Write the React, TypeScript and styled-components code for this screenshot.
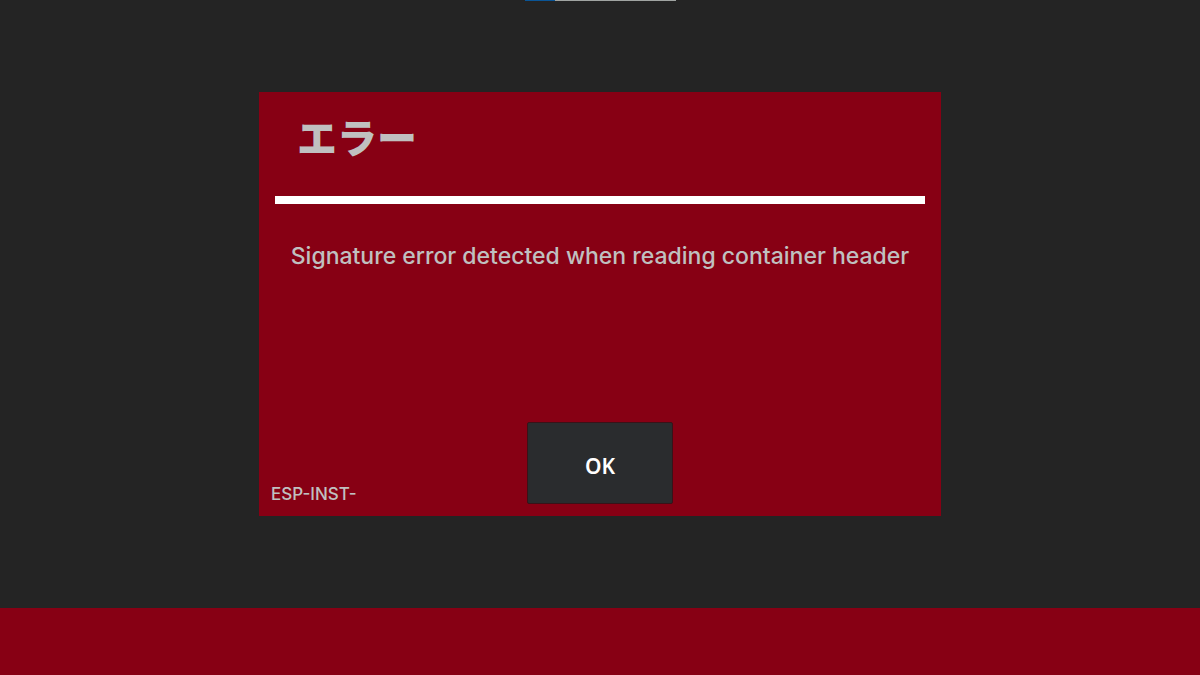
import styled, { createGlobalStyle } from 'styled-components';

const GlobalStyle = createGlobalStyle`
  * {
    box-sizing: border-box;
  }

  body {
    margin: 0;
    background: #242424;
    color: #c0c0c0;
    font-family: Inter, 'Noto Sans CJK JP', sans-serif;
  }
`;

const Screen = styled.div`
  display: flex;
  flex-direction: column;
  align-items: center;
  min-height: 100vh;
`;

const Progress = styled.div`
  width: 151px;
  height: 1px;
  background: #a0a4a2;
`;

const ProgressFill = styled.div`
  height: 100%;
  background: #0a5596;
`;

const Main = styled.main`
  flex: 1;
  display: flex;
  align-items: center;
  justify-content: center;
  width: 100%;
  padding-bottom: 2px;
`;

const Dialog = styled.section`
  display: flex;
  flex-direction: column;
  width: 100%;
  max-width: 682px;
  min-height: 424px;
  padding: 12px;
  background: #870014;
`;

const Title = styled.h1`
  margin: 0 0 22px;
  padding: 0 26px;
  font-size: 40px;
  line-height: 70px;
  font-weight: 900;
`;

const Divider = styled.hr`
  width: calc(100% - 8px);
  height: 8px;
  margin: 0 auto;
  border: none;
  background: #ffffff;
`;

const Message = styled.p`
  margin: 36px 0 0;
  font-size: 23px;
  line-height: 32px;
  font-weight: 500;
  text-align: center;
`;

const Footer = styled.footer`
  display: grid;
  grid-template-columns: 1fr auto 1fr;
  align-items: end;
  margin-top: auto;
`;

const Code = styled.span`
  font-size: 17px;
  line-height: 20px;
  font-weight: 500;
`;

const OkButton = styled.button`
  width: 146px;
  height: 82px;
  padding: 6px 0 0;
  border: 1px solid #3a1218;
  border-radius: 2px;
  background: #2a2c2e;
  color: #ffffff;
  font-family: 'Noto Sans', sans-serif;
  font-size: 21px;
  font-weight: 600;
  cursor: pointer;
`;

const BottomBar = styled.div`
  width: 100%;
  height: 67px;
  background: #870014;
`;

const App = () => {
  const progress = 20;

  return (
    <>
      <GlobalStyle />
      <Screen>
        <Progress role="progressbar" aria-label="Progress" aria-valuenow={progress}>
          <ProgressFill style={{ width: `${progress}%` }} />
        </Progress>
        <Main>
          <Dialog role="alertdialog" aria-labelledby="error-title" aria-describedby="error-message">
            <Title id="error-title">エラー</Title>
            <Divider />
            <Message id="error-message">
              Signature error detected when reading container header
            </Message>
            <Footer>
              <Code>ESP-INST-</Code>
              <OkButton type="button">OK</OkButton>
            </Footer>
          </Dialog>
        </Main>
        <BottomBar />
      </Screen>
    </>
  );
};

export default App;
